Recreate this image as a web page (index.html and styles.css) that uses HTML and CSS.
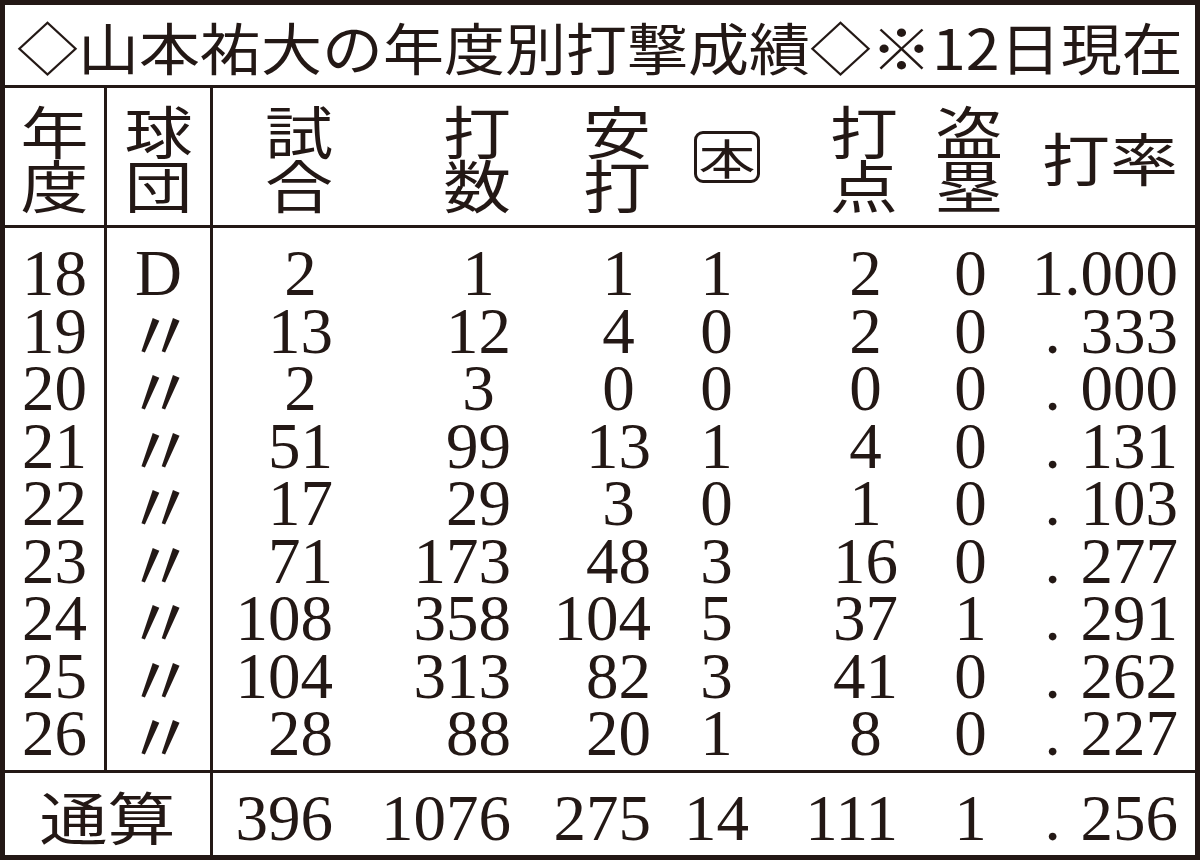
FILE: index.html
```html
<!DOCTYPE html>
<html lang="ja">
<head>
<meta charset="utf-8">
<title>山本祐大の年度別打撃成績</title>
<link rel="stylesheet" href="styles.css">
</head>
<body>
<div class="chart">
  <div class="title"><span class="title-text">◇山本祐大の年度別打撃成績◇※12日現在</span></div>

  <div class="head row">
    <div class="cell sep center"><span class="hd">年<br>度</span></div>
    <div class="cell sep center"><span class="hd">球<br>団</span></div>
    <div class="cell"><span class="hd">試<br>合</span></div>
    <div class="cell"><span class="hd">打<br>数</span></div>
    <div class="cell"><span class="hd">安<br>打</span></div>
    <div class="cell"><span class="hr-box"><span class="hr-glyph">本</span></span></div>
    <div class="cell"><span class="hd">打<br>点</span></div>
    <div class="cell"><span class="hd">盗<br>塁</span></div>
    <div class="cell avg"><span class="hd">打率</span></div>
  </div>

  <div class="body">
    <div class="row data first">
      <div class="cell sep center">18</div>
      <div class="cell sep center">D</div>
      <div class="cell"><span class="n">2</span></div>
      <div class="cell"><span class="n">1</span></div>
      <div class="cell"><span class="n">1</span></div>
      <div class="cell"><span class="n">1</span></div>
      <div class="cell"><span class="n">2</span></div>
      <div class="cell"><span class="n">0</span></div>
      <div class="cell avg">1.000</div>
    </div>
    <div class="row data">
      <div class="cell sep center">19</div>
      <div class="cell sep center"><span class="ditto">〃</span></div>
      <div class="cell"><span class="n">13</span></div>
      <div class="cell"><span class="n">12</span></div>
      <div class="cell"><span class="n">4</span></div>
      <div class="cell"><span class="n">0</span></div>
      <div class="cell"><span class="n">2</span></div>
      <div class="cell"><span class="n">0</span></div>
      <div class="cell avg"><span class="lead">.</span>333</div>
    </div>
    <div class="row data">
      <div class="cell sep center">20</div>
      <div class="cell sep center"><span class="ditto">〃</span></div>
      <div class="cell"><span class="n">2</span></div>
      <div class="cell"><span class="n">3</span></div>
      <div class="cell"><span class="n">0</span></div>
      <div class="cell"><span class="n">0</span></div>
      <div class="cell"><span class="n">0</span></div>
      <div class="cell"><span class="n">0</span></div>
      <div class="cell avg"><span class="lead">.</span>000</div>
    </div>
    <div class="row data">
      <div class="cell sep center">21</div>
      <div class="cell sep center"><span class="ditto">〃</span></div>
      <div class="cell"><span class="n">51</span></div>
      <div class="cell"><span class="n">99</span></div>
      <div class="cell"><span class="n">13</span></div>
      <div class="cell"><span class="n">1</span></div>
      <div class="cell"><span class="n">4</span></div>
      <div class="cell"><span class="n">0</span></div>
      <div class="cell avg"><span class="lead">.</span>131</div>
    </div>
    <div class="row data">
      <div class="cell sep center">22</div>
      <div class="cell sep center"><span class="ditto">〃</span></div>
      <div class="cell"><span class="n">17</span></div>
      <div class="cell"><span class="n">29</span></div>
      <div class="cell"><span class="n">3</span></div>
      <div class="cell"><span class="n">0</span></div>
      <div class="cell"><span class="n">1</span></div>
      <div class="cell"><span class="n">0</span></div>
      <div class="cell avg"><span class="lead">.</span>103</div>
    </div>
    <div class="row data">
      <div class="cell sep center">23</div>
      <div class="cell sep center"><span class="ditto">〃</span></div>
      <div class="cell"><span class="n">71</span></div>
      <div class="cell"><span class="n">173</span></div>
      <div class="cell"><span class="n">48</span></div>
      <div class="cell"><span class="n">3</span></div>
      <div class="cell"><span class="n">16</span></div>
      <div class="cell"><span class="n">0</span></div>
      <div class="cell avg"><span class="lead">.</span>277</div>
    </div>
    <div class="row data">
      <div class="cell sep center">24</div>
      <div class="cell sep center"><span class="ditto">〃</span></div>
      <div class="cell"><span class="n">108</span></div>
      <div class="cell"><span class="n">358</span></div>
      <div class="cell"><span class="n">104</span></div>
      <div class="cell"><span class="n">5</span></div>
      <div class="cell"><span class="n">37</span></div>
      <div class="cell"><span class="n">1</span></div>
      <div class="cell avg"><span class="lead">.</span>291</div>
    </div>
    <div class="row data">
      <div class="cell sep center">25</div>
      <div class="cell sep center"><span class="ditto">〃</span></div>
      <div class="cell"><span class="n">104</span></div>
      <div class="cell"><span class="n">313</span></div>
      <div class="cell"><span class="n">82</span></div>
      <div class="cell"><span class="n">3</span></div>
      <div class="cell"><span class="n">41</span></div>
      <div class="cell"><span class="n">0</span></div>
      <div class="cell avg"><span class="lead">.</span>262</div>
    </div>
    <div class="row data last">
      <div class="cell sep center">26</div>
      <div class="cell sep center"><span class="ditto">〃</span></div>
      <div class="cell"><span class="n">28</span></div>
      <div class="cell"><span class="n">88</span></div>
      <div class="cell"><span class="n">20</span></div>
      <div class="cell"><span class="n">1</span></div>
      <div class="cell"><span class="n">8</span></div>
      <div class="cell"><span class="n">0</span></div>
      <div class="cell avg"><span class="lead">.</span>227</div>
    </div>
  </div>

  <div class="row total">
    <div class="cell sep center span2"><span class="hd">通算</span></div>
    <div class="cell"><span class="n">396</span></div>
    <div class="cell"><span class="n">1076</span></div>
    <div class="cell"><span class="n">275</span></div>
    <div class="cell"><span class="n">14</span></div>
    <div class="cell"><span class="n">111</span></div>
    <div class="cell"><span class="n">1</span></div>
    <div class="cell avg"><span class="lead">.</span>256</div>
  </div>
</div>
</body>
</html>
```

FILE: styles.css
```css
* {
  box-sizing: border-box;
  margin: 0;
  padding: 0;
}

html, body {
  background: #ffffff;
}

body {
  width: 1200px;
  height: 860px;
  overflow: hidden;
  color: #231815;
}

.chart {
  width: 1200px;
  height: 860px;
  border: 5px solid #231815;
  display: flex;
  flex-direction: column;
  background: #ffffff;
}

/* title */
.title {
  height: 83px;
  flex: none;
  border-bottom: 3px solid #231815;
  display: flex;
  align-items: center;
  padding-left: 12px;
  white-space: nowrap;
  font-family: "Noto Sans CJK JP", "Noto Sans", sans-serif;
  font-size: 61px;
  line-height: 1;
}

.title-text {
  display: inline-block;
  transform: scaleY(0.92);
  transform-origin: center;
}

/* rows */
.row {
  display: grid;
  grid-template-columns: 102px 106px 120px 178px 140px 98px 149px 105px 192px;
}

.cell {
  text-align: right;
  white-space: nowrap;
}

.cell.sep {
  border-right: 3px solid #231815;
}

.cell.center {
  text-align: center;
}

.cell.avg {
  padding-right: 17px;
}

/* header */
.head {
  height: 140px;
  flex: none;
  border-bottom: 3px solid #231815;
}

.head .cell {
  display: flex;
  align-items: center;
  justify-content: flex-end;
}

.head .cell.center {
  justify-content: center;
}

.hd {
  display: inline-block;
  font-family: "Noto Sans CJK JP", "Noto Sans", sans-serif;
  font-size: 68px;
  line-height: 66px;
  transform: scaleY(0.83);
  transform-origin: center;
}

.hr-box {
  display: inline-flex;
  align-items: center;
  justify-content: center;
  width: 66px;
  height: 52px;
  border: 3px solid #231815;
  border-radius: 9px;
  margin-right: -11px;
}

.hr-glyph {
  display: inline-block;
  font-family: "Noto Sans CJK JP", "Noto Sans", sans-serif;
  font-size: 57px;
  line-height: 1;
  transform: scaleY(0.74);
}

/* body */
.body {
  height: 545px;
  flex: none;
  border-bottom: 3px solid #231815;
  display: flex;
  flex-direction: column;
}

.data {
  height: 57.5px;
  font-family: "Liberation Serif", "Times New Roman", serif;
  font-size: 65px;
  line-height: 57.5px;
}

.data.first {
  height: 74.5px;
}

.data.first .cell {
  padding-top: 17px;
}

.data.last {
  height: 65px;
}

.n {
  display: inline-block;
  min-width: 2ch;
  text-align: center;
}

.lead {
  display: inline-block;
  width: 36px;
  text-align: left;
}

.ditto {
  display: inline-block;
  font-family: "Noto Sans CJK JP", sans-serif;
  font-size: 70px;
  line-height: 57.5px;
  margin-left: 4px;
}

/* total */
.total {
  height: 82px;
  flex: none;
  font-family: "Liberation Serif", "Times New Roman", serif;
  font-size: 65px;
  line-height: 82px;
}

.total .cell {
  padding-top: 4px;
}

.total .span2 {
  grid-column: span 2;
  display: flex;
  align-items: center;
  justify-content: center;
  padding-top: 0;
}
```
